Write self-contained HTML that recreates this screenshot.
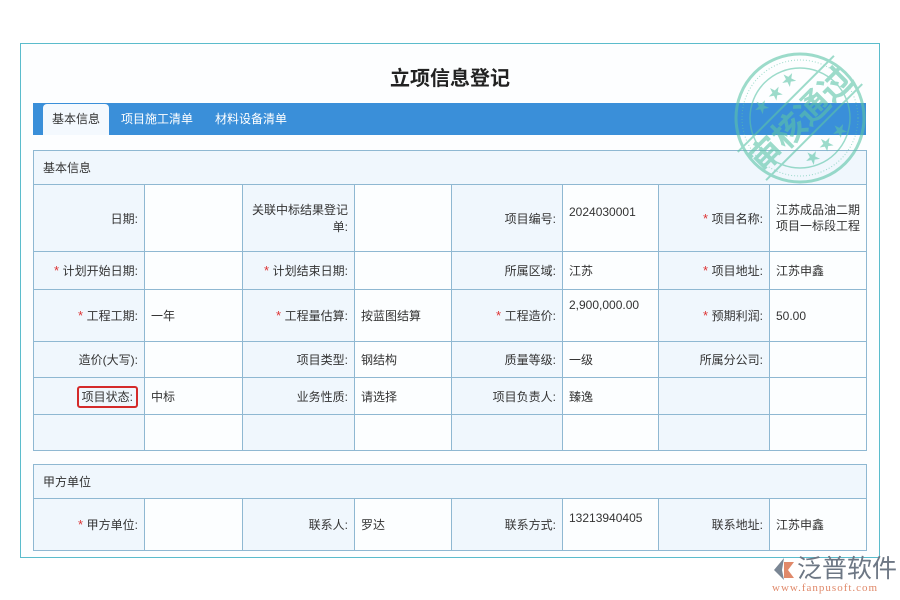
<!DOCTYPE html>
<html><head><meta charset="utf-8"><style>
*{margin:0;padding:0;box-sizing:border-box}
body{width:900px;height:600px;background:#fff;position:relative;overflow:hidden;font-family:"Liberation Sans","Noto Sans CJK SC",sans-serif;font-size:12px;color:#333}
.frame{position:absolute;left:20px;top:43px;width:860px;height:515px;border:1px solid #5bbccc;background:#fdfeff}
.title{position:absolute;left:0;top:62px;width:900px;text-align:center;font-size:20px;font-weight:bold;color:#222}
.tabs{position:absolute;left:33px;top:103px;width:833px;height:32px;background:#3a8fd9}
.tab{position:absolute;top:7px;color:#fff;font-size:12px}
.tab.act{left:10px;top:1px;width:66px;height:31px;background:#f4f9fe;color:#333;border-radius:4px 4px 0 0;text-align:center;line-height:30px}
table{position:absolute;left:33px;border-collapse:collapse;table-layout:fixed}
td{border:1px solid #8fb8d2;font-size:12px;vertical-align:middle;padding:0 6px}
td.l{background:#f0f7fd;text-align:right;padding-right:6px}
td.v{background:#fcfeff;text-align:left;vertical-align:top;padding-top:8px}
td.vm{background:#fcfeff;vertical-align:middle}
td.h{background:#f0f7fd;padding-left:9px}
.r{color:#d33;font-size:13px}
.box{border:2px solid #d42a2a;border-radius:3px;padding:2px 3px}
</style></head><body>
<div class="frame"></div>
<div class="title">立项信息登记</div>
<div class="tabs"><div class="tab act">基本信息</div><div class="tab" style="left:88px">项目施工清单</div><div class="tab" style="left:182px">材料设备清单</div></div>
<table style="top:150px;width:833px">
<colgroup><col style="width:111px"><col style="width:98px"><col style="width:112px"><col style="width:97px"><col style="width:111px"><col style="width:96px"><col style="width:111px"><col style="width:97px"></colgroup>
<tr style="height:34px"><td class="h" colspan="8">基本信息</td></tr>
<tr style="height:67px"><td class="l">日期:</td><td class="vm"></td><td class="l">关联中标结果登记单:</td><td class="vm"></td><td class="l">项目编号:</td><td class="v" style="padding-top:20px">2024030001</td><td class="l"><span class="r">* </span>项目名称:</td><td class="vm" style="line-height:16px">江苏成品油二期项目一标段工程</td></tr>
<tr style="height:38px"><td class="l"><span class="r">* </span>计划开始日期:</td><td class="vm"></td><td class="l"><span class="r">* </span>计划结束日期:</td><td class="vm"></td><td class="l">所属区域:</td><td class="vm">江苏</td><td class="l"><span class="r">* </span>项目地址:</td><td class="vm">江苏申鑫</td></tr>
<tr style="height:52px"><td class="l"><span class="r">* </span>工程工期:</td><td class="vm">一年</td><td class="l"><span class="r">* </span>工程量估算:</td><td class="vm">按蓝图结算</td><td class="l"><span class="r">* </span>工程造价:</td><td class="v">2,900,000.00</td><td class="l"><span class="r">* </span>预期利润:</td><td class="vm">50.00</td></tr>
<tr style="height:36px"><td class="l">造价(大写):</td><td class="vm"></td><td class="l">项目类型:</td><td class="vm">钢结构</td><td class="l">质量等级:</td><td class="vm">一级</td><td class="l">所属分公司:</td><td class="vm"></td></tr>
<tr style="height:37px"><td class="l"><span class="box">项目状态:</span></td><td class="vm">中标</td><td class="l">业务性质:</td><td class="vm">请选择</td><td class="l">项目负责人:</td><td class="vm">臻逸</td><td class="l"></td><td class="vm"></td></tr>
<tr style="height:36px"><td class="l"></td><td class="vm"></td><td class="l"></td><td class="vm"></td><td class="l"></td><td class="vm"></td><td class="l"></td><td class="vm"></td></tr>
</table>
<table style="top:464px;width:833px">
<colgroup><col style="width:111px"><col style="width:98px"><col style="width:112px"><col style="width:97px"><col style="width:111px"><col style="width:96px"><col style="width:111px"><col style="width:97px"></colgroup>
<tr style="height:34px"><td class="h" colspan="8">甲方单位</td></tr>
<tr style="height:52px"><td class="l"><span class="r">* </span>甲方单位:</td><td class="vm"></td><td class="l">联系人:</td><td class="vm">罗达</td><td class="l">联系方式:</td><td class="v" style="padding-left:6px;padding-top:12px">13213940405</td><td class="l">联系地址:</td><td class="vm">江苏申鑫</td></tr>
</table>
<svg style="position:absolute;left:730px;top:50px;opacity:.6" width="140" height="140" viewBox="0 0 140 140">
<g fill="none" stroke="#5cc4a8"><circle cx="70" cy="68" r="64" stroke-width="3"/><circle cx="70" cy="68" r="58" stroke-width="1" stroke-dasharray="1 2"/><circle cx="70" cy="68" r="50" stroke-width="1.5"/>
<g transform="rotate(-45 70 68)"><line x1="2" y1="48" x2="138" y2="48" stroke-width="2"/><line x1="2" y1="88" x2="138" y2="88" stroke-width="2"/></g></g>
<g transform="rotate(-45 70 68)"><text x="70" y="81" text-anchor="middle" font-size="33" font-weight="bold" fill="#5cc4a8" font-family="Noto Sans CJK SC,sans-serif">审核通过</text>
<text x="70" y="38" text-anchor="middle" font-size="15" fill="#5cc4a8">★ ★ ★</text><text x="70" y="110" text-anchor="middle" font-size="15" fill="#5cc4a8">★ ★ ★</text></g>
</svg>
<svg style="position:absolute;left:770px;top:556px" width="26" height="26" viewBox="0 0 26 26"><path d="M14 2 L4 14 L14 24 L12 14 Z" fill="#7a8694"/><path d="M14 6 L24 6 L18 14 L24 22 L14 22 Z" fill="#e0896a"/></svg>
<div style="position:absolute;left:797px;top:553px;font-size:25px;color:#6d7784;font-family:'Noto Sans CJK SC',sans-serif;letter-spacing:0px;line-height:28px">泛普软件</div>
<div style="position:absolute;left:772px;top:582px;font-size:11px;color:#e0896a;font-family:'Liberation Serif',serif;letter-spacing:1px">www.fanpusoft.com</div>
</body></html>
